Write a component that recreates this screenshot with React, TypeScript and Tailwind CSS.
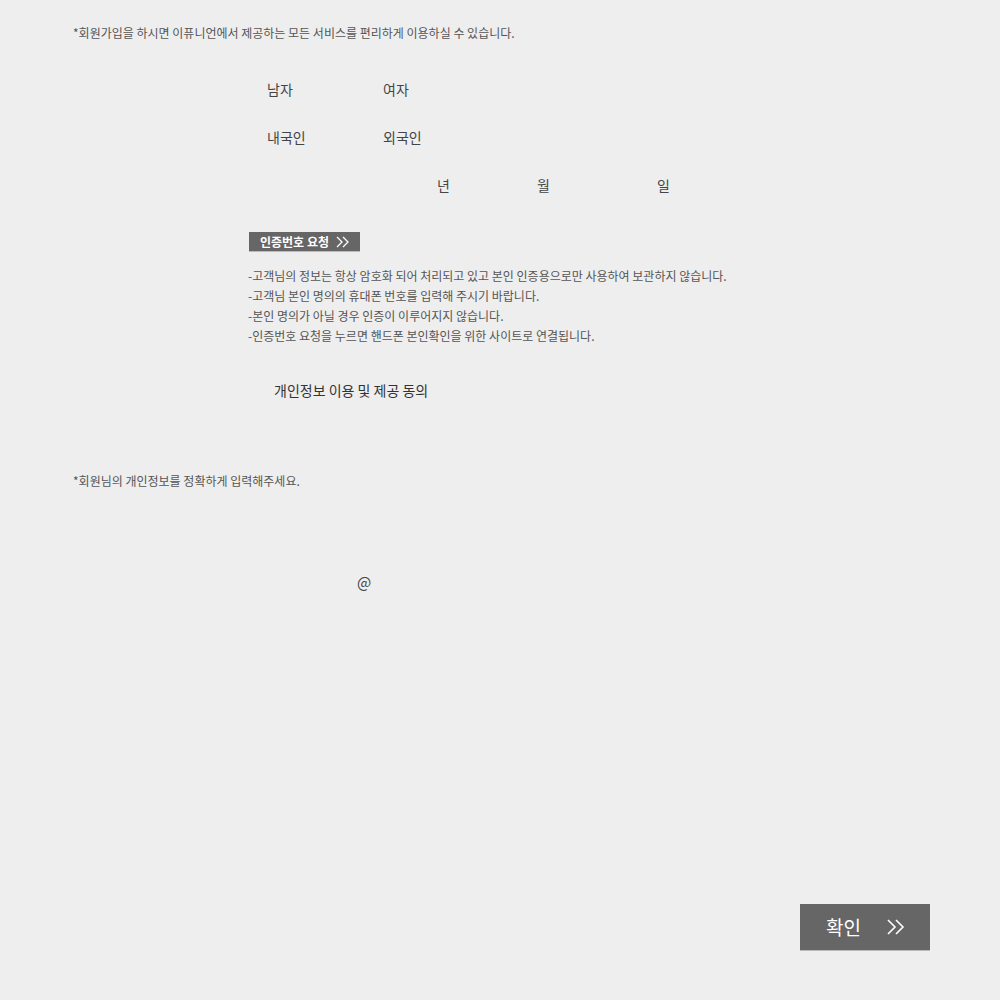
export default function App() {
  const notices = [
    "-고객님의 정보는 항상 암호화 되어 처리되고 있고 본인 인증용으로만 사용하여 보관하지 않습니다.",
    "-고객님 본인 명의의 휴대폰 번호를 입력해 주시기 바랍니다.",
    "-본인 명의가 아닐 경우 인증이 이루어지지 않습니다.",
    "-인증번호 요청을 누르면 핸드폰 본인확인을 위한 사이트로 연결됩니다.",
  ];
  return (
    <main className="w-[1000px] h-[1000px] bg-[#eeeeee] font-['Noto_Sans_CJK_KR',sans-serif] text-[#444] flex flex-col">
      <p className="pl-[73px] pt-[24px] text-[12px] leading-[18px] text-[#555]">
        *회원가입을 하시면 이퓨니언에서 제공하는 모든 서비스를 편리하게 이용하실 수 있습니다.
      </p>

      <div className="pl-[267px] mt-[37px] flex text-[14px] leading-[20px] text-[#444]">
        <span className="w-[116px]">남자</span>
        <span>여자</span>
      </div>
      <div className="pl-[267px] mt-[28px] flex text-[14px] leading-[20px] text-[#444]">
        <span className="w-[116px]">내국인</span>
        <span>외국인</span>
      </div>
      <div className="pl-[437px] mt-[28px] flex text-[14px] leading-[20px] text-[#444]">
        <span className="w-[100px]">년</span>
        <span className="w-[120px]">월</span>
        <span>일</span>
      </div>

      <div className="pl-[249px] mt-[37px]">
        <button className="w-[111px] h-[20px] bg-[#666] border-b border-[#bbb] text-white text-[12px] leading-[20px] font-bold flex items-center pl-[11px] gap-[7px]">
          <span>인증번호 요청</span>
          <svg width="14" height="12" viewBox="0 0 14 12" fill="none" stroke="white" strokeWidth="1.3">
            <path d="M1 1l5 5-5 5M7 1l5 5-5 5" />
          </svg>
        </button>
      </div>

      <ul className="pl-[248px] mt-[14px] text-[12px] leading-[20px] text-[#555]">
        {notices.map((n) => (
          <li key={n}>{n}</li>
        ))}
      </ul>

      <p className="pl-[274px] mt-[34px] text-[14px] leading-[20px] text-[#333]">
        개인정보 이용 및 제공 동의
      </p>

      <p className="pl-[73px] mt-[72px] text-[12px] leading-[18px] text-[#555]">
        *회원님의 개인정보를 정확하게 입력해주세요.
      </p>

      <p className="pl-[357px] mt-[82px] text-[15px] leading-[20px] text-[#444]">@</p>

      <div className="flex justify-end pr-[70px] mt-auto mb-[49px]">
        <button className="w-[130px] h-[47px] bg-[#666] border-b border-[#bbb] text-white text-[19px] flex items-center pl-[26px] gap-[26px]">
          <span>확인</span>
          <svg width="18" height="16" viewBox="0 0 18 16" fill="none" stroke="white" strokeWidth="1.6">
            <path d="M1 1l7 7-7 7M9 1l7 7-7 7" />
          </svg>
        </button>
      </div>
    </main>
  );
}
